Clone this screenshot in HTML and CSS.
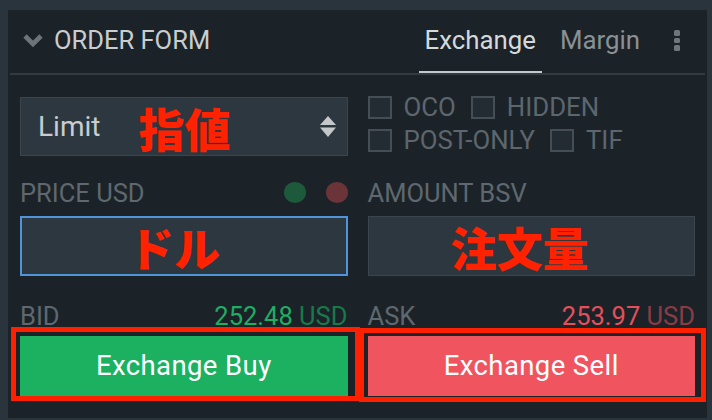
FILE: index.html
```html
<!DOCTYPE html>
<html lang="ja">
<head>
<meta charset="utf-8">
<title>Order Form</title>
<link rel="stylesheet" href="styles.css">
</head>
<body>
<div class="panel">
  <div class="header">
    <div class="title">
      <svg class="chevron" width="22" height="15" viewBox="0 0 22 15"><path d="M3 3 L11 11 L19 3" fill="none" stroke="#6d757b" stroke-width="4.6"/></svg>
      <span>ORDER FORM</span>
    </div>
    <div class="tabs">
      <div class="tab active">Exchange</div>
      <div class="tab">Margin</div>
      <div class="kebab"><i></i><i></i><i></i></div>
    </div>
  </div>
  <div class="body">
    <div class="select">
      <span class="select-value">Limit</span>
      <span class="jp jp-select">指値</span>
      <svg class="stepper" width="16" height="21" viewBox="0 0 16 21"><path d="M8 0 L16 9 L0 9 Z M0 11.5 L16 11.5 L8 21 Z" fill="#c4c8cb"/></svg>
    </div>
    <div class="checks">
      <div class="check-row">
        <label class="check"><span class="box"></span>OCO</label>
        <label class="check"><span class="box"></span>HIDDEN</label>
      </div>
      <div class="check-row">
        <label class="check"><span class="box"></span>POST-ONLY</label>
        <label class="check"><span class="box"></span>TIF</label>
      </div>
    </div>

    <div class="label-row">
      <span>PRICE USD</span>
      <span class="dots"><span class="dot dot-green"></span><span class="dot dot-red"></span></span>
    </div>
    <div class="label-row">
      <span>AMOUNT BSV</span>
    </div>

    <div class="input input-focus"><span class="jp jp-price">ドル</span></div>
    <div class="input"><span class="jp jp-amount">注文量</span></div>

    <div class="quote-row">
      <span>BID</span>
      <span class="quote quote-bid">252.48 <span class="unit">USD</span></span>
    </div>
    <div class="quote-row">
      <span>ASK</span>
      <span class="quote quote-ask">253.97 <span class="unit">USD</span></span>
    </div>

    <div class="btn-wrap mark-left"><button class="btn btn-buy">Exchange Buy</button></div>
    <div class="btn-wrap mark-right"><button class="btn btn-sell">Exchange Sell</button></div>
  </div>
</div>
</body>
</html>
```

FILE: styles.css
```css
html, body {
  margin: 0;
  padding: 0;
}
body {
  background: #2a343c;
  font-family: Roboto, "Noto Sans", "Noto Sans CJK JP", sans-serif;
  width: 712px;
  height: 420px;
  overflow: hidden;
  padding-top: 10px;
  box-sizing: border-box;
}
.panel {
  margin-left: 8px;
  width: 699px;
  height: 408px;
  background: #1b2329;
}
.header {
  height: 63px;
  margin: 0 2px;
  border-bottom: 2px solid #313b42;
  display: flex;
  justify-content: space-between;
  align-items: stretch;
  padding-left: 12px;
  padding-right: 25px;
}
.title {
  display: flex;
  align-items: center;
  gap: 10px;
  color: #c9cdd0;
  font-size: 25.5px;
  padding-bottom: 4px;
}
.chevron {
  display: block;
  margin-top: 2px;
}
.tabs {
  display: flex;
  align-items: stretch;
}
.tab {
  display: flex;
  align-items: center;
  padding: 0 6px 2px;
  font-size: 25.8px;
  color: #8a9095;
  border-bottom: 2px solid transparent;
  margin-right: 12px;
}
.tab.active {
  color: #d5d9dc;
  border-bottom-color: #c5c9cc;
}
.kebab {
  display: flex;
  flex-direction: column;
  justify-content: center;
  gap: 2px;
  margin-left: 16px;
  padding-bottom: 2px;
}
.kebab i {
  display: block;
  width: 6px;
  height: 5.5px;
  border-radius: 1.5px;
  background: #6f777d;
}
.body {
  display: grid;
  grid-template-columns: 1fr 1fr;
  grid-template-rows: 60px 60px 60px 60px 60px;
  column-gap: 20px;
  padding: 21px 12px 0;
}
.select {
  height: 59px;
  margin-top: 1px;
  box-sizing: border-box;
  border: 1px solid #3a454e;
  background: #2c3740;
  display: flex;
  align-items: center;
  padding: 0 11px 0 17px;
}
.select-value {
  font-size: 28px;
  color: #c8ccd0;
}
.jp {
  font-family: "Noto Sans CJK JP", sans-serif;
  font-weight: 900;
  font-size: 46px;
  color: #ff2200;
  line-height: 1;
}
.jp-select {
  margin-left: 38px;
}
.stepper {
  margin-left: auto;
  display: block;
}
.checks {
  display: flex;
  flex-direction: column;
  gap: 9.5px;
}
.check-row {
  display: flex;
  align-items: center;
}
.check {
  display: flex;
  align-items: center;
  gap: 12px;
  font-size: 25.8px;
  color: #5d666d;
  margin-right: 15px;
  line-height: 23px;
}
.box {
  width: 24px;
  height: 23px;
  box-sizing: border-box;
  border: 2px solid #454e55;
  background: #232c32;
}
.label-row {
  display: flex;
  justify-content: space-between;
  align-items: center;
  padding-top: 13px;
  font-size: 25.5px;
  color: #5f686e;
}
.dots {
  display: flex;
  gap: 20px;
}
.dot {
  width: 22px;
  height: 21px;
  border-radius: 50%;
}
.dot-green { background: #1d5a3c; }
.dot-red { background: #6b3439; }
.input {
  box-sizing: border-box;
  height: 60px;
  border: 1px solid #3a454e;
  background: #2c3740;
  display: flex;
  align-items: center;
}
.input-focus {
  border: 2px solid #4f93d8;
}
.jp-price { margin-left: 106px; }
.jp-amount { margin-left: 82px; }
.quote-row {
  display: flex;
  justify-content: space-between;
  align-items: center;
  padding-top: 19px;
  font-size: 25.5px;
  color: #5f686e;
}
.quote-bid { color: #1fae62; }
.quote-bid .unit { color: #187a48; }
.quote-ask { color: #e3505c; }
.quote-ask .unit { color: #8a3c44; }
.btn-wrap {
  position: relative;
}
.btn {
  display: block;
  width: 100%;
  height: 59.5px;
  border: 0;
  margin: 0;
  font-family: Roboto, sans-serif;
  font-size: 27.5px;
  font-weight: 400;
  letter-spacing: 0.4px;
  color: #ffffff;
  cursor: pointer;
}
.btn-buy { background: #1bb161; }
.btn-sell { background: #f0545f; }
.btn-wrap::after {
  content: "";
  position: absolute;
  border: 5px solid #ff2000;
  pointer-events: none;
}
.mark-left::after {
  left: -9px;
  top: -9px;
  right: -12px;
  bottom: -5px;
}
.mark-right::after {
  left: -9px;
  top: -8px;
  right: -11px;
  bottom: -6px;
}
```
